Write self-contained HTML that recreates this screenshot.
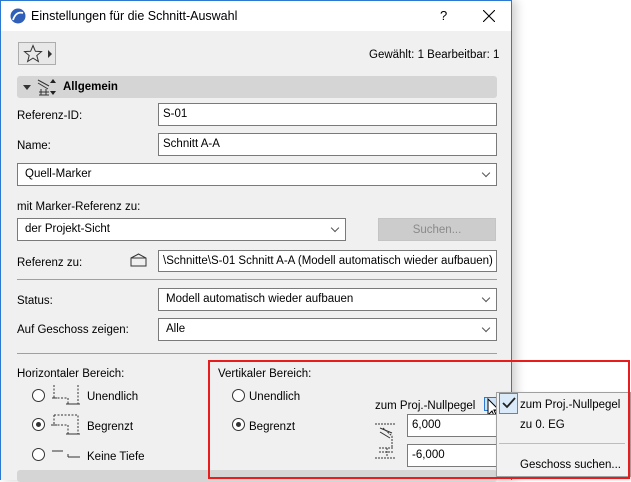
<!DOCTYPE html><html><head><meta charset="utf-8"><style>
*{box-sizing:border-box;margin:0;padding:0}
body{width:631px;height:480px;overflow:hidden;background:#fff;font-family:"Liberation Sans",sans-serif;font-size:11.5px;color:#000;position:relative}
.a{position:absolute;white-space:nowrap}
.l{margin-top:2px}
.dlg{position:absolute;left:0;top:0;width:512px;height:480px;background:#f0f0f0;border-left:1px solid #2b79d0;border-right:1px solid #2b79d0;box-shadow:4px 0 10px rgba(0,0,0,.2)}
.tb{position:absolute;left:0;top:0;width:510px;height:31px;background:#fff;border-top:1px solid #2b79d0}
.in{position:absolute;background:#fff;border:1px solid #7a7a7a;height:23px;padding:4px 0 0 4px;white-space:nowrap;overflow:hidden}
.dd::after{content:"";position:absolute;right:7px;top:6px;width:5px;height:5px;border-right:1px solid #555;border-bottom:1px solid #555;transform:rotate(45deg)}
.sep{position:absolute;height:1px;background:#a0a0a0}
.r{position:absolute;width:13px;height:13px;border:1px solid #333;border-radius:50%;background:#fff}
.r.on::after{content:"";position:absolute;left:3px;top:3px;width:5px;height:5px;border-radius:50%;background:#333}
</style></head><body>
<div class="dlg">
<div class="tb">
<svg class="a" style="left:9px;top:7px" width="16" height="16"><circle cx="8" cy="8" r="7.5" fill="#2f5fb8"/><path d="M3 12 Q6 3 13 5" stroke="#fff" stroke-width="1.8" fill="none"/></svg>
<div class="a" style="left:30px;top:8px;font-size:12.5px">Einstellungen für die Schnitt-Auswahl</div>
<div class="a" style="left:439px;top:7px;font-size:13px">?</div>
<svg class="a" style="left:482px;top:9px" width="12" height="12"><path d="M0 0L12 12M12 0L0 12" stroke="#000" stroke-width="1.1"/></svg>
</div>
<div class="a" style="left:17px;top:42px;width:38px;height:23px;border:1px solid #adadad;background:#e8e8e8"></div>
<svg class="a" style="left:22px;top:44px" width="20" height="19"><path d="M10 1.5L12.4 7.3 18.5 7.6 13.8 11.5 15.4 17.5 10 14.1 4.6 17.5 6.2 11.5 1.5 7.6 7.6 7.3Z" fill="none" stroke="#333" stroke-width="1"/></svg>
<svg class="a" style="left:47px;top:50px" width="5" height="8"><path d="M0 0L4 4 0 8Z" fill="#333"/></svg>
<div class="a" style="left:368px;top:49px;width:128px;text-align:right">Gewählt: 1 Bearbeitbar: 1</div>
<div class="a" style="left:16px;top:76px;width:480px;height:22px;background:#d5d5d5;border-radius:3px"></div>
<svg class="a" style="left:22px;top:85px" width="8" height="5"><path d="M0 0H8L4 5Z" fill="#333"/></svg>
<svg class="a" style="left:36px;top:78px" width="22" height="18"><path d="M1 2L12 8M1 5L11 11M4 11V17M9 11V17M2 14H12M2 17H12" stroke="#333" fill="none"/><path d="M16 1L19 5H13ZM16 17L19 13H13Z" fill="#222"/></svg>
<div class="a" style="left:62px;top:81px;font-weight:bold">Allgemein</div>
<div class="a l" style="left:16px;top:108px">Referenz-ID:</div>
<div class="in" style="left:157px;top:103px;width:339px">S-01</div>
<div class="a l" style="left:16px;top:138px">Name:</div>
<div class="in" style="left:157px;top:133px;width:339px">Schnitt A-A</div>
<div class="in dd" style="left:16px;top:163px;width:480px;padding-left:7px">Quell-Marker</div>
<div class="a l" style="left:16px;top:199px">mit Marker-Referenz zu:</div>
<div class="in dd" style="left:16px;top:218px;width:329px;padding-left:7px">der Projekt-Sicht</div>
<div class="a" style="left:377px;top:218px;width:118px;height:23px;background:#cccccc;border:1px solid #c4c4c4;color:#8a8a8a;text-align:center;padding-top:5px">Suchen...</div>
<div class="a l" style="left:16px;top:255px">Referenz zu:</div>
<svg class="a" style="left:129px;top:253px" width="17" height="14"><path d="M1 5L8.5 1 16 5V13H1Z M1 5H16" fill="none" stroke="#333"/></svg>
<div class="in" style="left:157px;top:250px;width:339px;height:22px;padding-top:4px">\Schnitte\S-01 Schnitt A-A (Modell automatisch wieder aufbauen)</div>
<div class="sep" style="left:16px;top:279px;width:480px"></div>
<div class="a l" style="left:16px;top:293px">Status:</div>
<div class="in dd" style="left:157px;top:288px;width:339px;padding-left:7px">Modell automatisch wieder aufbauen</div>
<div class="a l" style="left:16px;top:322px">Auf Geschoss zeigen:</div>
<div class="in dd" style="left:157px;top:318px;width:339px;padding-left:7px">Alle</div>
<div class="sep" style="left:16px;top:353px;width:480px"></div>
<div class="a l" style="left:16px;top:366px">Horizontaler Bereich:</div>
<div class="r" style="left:31px;top:389px"></div>
<svg class="a" style="left:48px;top:384px" width="32" height="22"><path d="M5 1V14M5 14H19V20M29 1V20" stroke="#333" stroke-dasharray="2 1.5" fill="none"/><path d="M3 14H8M17 20H31" stroke="#333"/></svg>
<div class="a l" style="left:86px;top:389px">Unendlich</div>
<div class="r on" style="left:31px;top:418px"></div>
<svg class="a" style="left:48px;top:414px" width="32" height="22"><path d="M5 1V11M5 1H29V20M5 11H19V20" stroke="#333" stroke-dasharray="2 1.5" fill="none"/><path d="M2 11H8M17 20H31" stroke="#333"/></svg>
<div class="a l" style="left:86px;top:419px">Begrenzt</div>
<div class="r" style="left:31px;top:448px"></div>
<svg class="a" style="left:48px;top:446px" width="32" height="14"><path d="M3 5H14M19 11H31M19 8V11" stroke="#333"/></svg>
<div class="a l" style="left:86px;top:449px">Keine Tiefe</div>
<div class="a l" style="left:217px;top:366px">Vertikaler Bereich:</div>
<div class="r" style="left:231px;top:389px"></div>
<div class="a l" style="left:248px;top:389px">Unendlich</div>
<div class="r on" style="left:231px;top:418px"></div>
<div class="a l" style="left:248px;top:419px">Begrenzt</div>
<div class="a l" style="left:374px;top:398px">zum Proj.-Nullpegel</div>
<div class="a" style="left:483px;top:397px;width:14px;height:14px;border:1px solid #2b79d0;background:#cfe3f7"></div>
<svg class="a" style="left:483px;top:397px" width="22" height="26"><path d="M4 2V18L8 14 11 21 13 20 10 13H15Z" fill="#fff" stroke="#000" stroke-width="1"/></svg>
<svg class="a" style="left:373px;top:418px" width="30" height="44"><path d="M1 6H22M1 40H22M9 10L18 18V30M13 30V38M5 30H20M5 34H20" stroke="#333" stroke-dasharray="2 1" fill="none"/><path d="M6 10L18 15M6 14L16 20" stroke="#333"/></svg>
<div class="in" style="left:406px;top:414px;width:90px">6,000</div>
<div class="in" style="left:406px;top:444px;width:90px">-6,000</div>
<div class="a" style="left:16px;top:470px;width:480px;height:12px;background:#d5d5d5;border-radius:3px"></div>
</div>
<div class="a" style="left:496px;top:392px;width:135px;height:85px;background:#f2f2f2;border:1px solid #a0a0a0;box-shadow:2px 2px 4px rgba(0,0,0,.2)"></div>
<div class="a" style="left:499px;top:393px;width:19px;height:21px;border:1px solid #3c8ee0;background:#dbeaf9"></div>
<svg class="a" style="left:502px;top:397px" width="14" height="12"><path d="M1 6L5 10 13 1" stroke="#222" stroke-width="1.8" fill="none"/></svg>
<div class="a l" style="left:520px;top:397px">zum Proj.-Nullpegel</div>
<div class="a l" style="left:520px;top:417px">zu 0. EG</div>
<div class="a" style="left:499px;top:443px;width:126px;height:1px;background:#bdbdbd"></div>
<div class="a l" style="left:520px;top:457px">Geschoss suchen...</div>
<div class="a" style="left:208px;top:360px;width:422px;height:119px;border:2px solid #e81c1c"></div>
</body></html>
